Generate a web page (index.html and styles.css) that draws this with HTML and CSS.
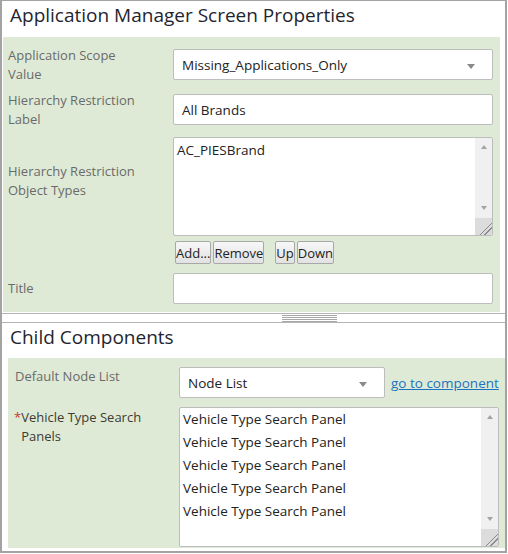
FILE: index.html
```html
<!DOCTYPE html>
<html>
<head>
<meta charset="utf-8">
<link rel="stylesheet" href="styles.css">
</head>
<body>
<div class="frame">
  <section class="props">
    <h1 class="heading">Application Manager Screen Properties</h1>
    <div class="panel panel-top">
      <div class="row">
        <div class="lbl">Application Scope<br>Value</div>
        <div class="ctrl select"><span class="val">Missing_Applications_Only</span><i class="caret"></i></div>
      </div>
      <div class="row row-2">
        <div class="lbl">Hierarchy Restriction<br>Label</div>
        <div class="ctrl input"><span class="val">All Brands</span></div>
      </div>
      <div class="row row-3">
        <div class="lbl lbl-3">Hierarchy Restriction<br>Object Types</div>
        <div class="stack">
          <div class="ctrl textarea">
            <span class="ta-text">AC_PIESBrand</span>
            <div class="vscroll">
              <i class="up"></i><span class="fill"></span><i class="down"></i><span class="grip"></span>
            </div>
          </div>
          <div class="btns">
            <button class="btn">Add...</button><button class="btn">Remove</button>
            <span class="btn-space"></span>
            <button class="btn">Up</button><button class="btn">Down</button>
          </div>
        </div>
      </div>
      <div class="row row-4">
        <div class="lbl">Title</div>
        <div class="ctrl input"></div>
      </div>
    </div>
  </section>
  <div class="splitter"><div class="handle"><i></i><i></i><i></i><i></i></div></div>
  <section class="child">
    <h2 class="heading heading-2">Child Components</h2>
  </section>
  <div class="panel panel-bottom">
    <div class="row row-b1">
      <div class="lbl lbl-b">Default Node List</div>
      <div class="ctrl select select-sm"><span class="val">Node List</span><i class="caret"></i></div>
      <a class="link" href="#">go to component</a>
    </div>
    <div class="row row-b2">
      <div class="lbl lbl-b lbl-req"><span class="ast">*</span><span>Vehicle Type Search<br>Panels</span></div>
      <div class="ctrl listbox">
        <ul class="items">
          <li>Vehicle Type Search Panel</li>
          <li>Vehicle Type Search Panel</li>
          <li>Vehicle Type Search Panel</li>
          <li>Vehicle Type Search Panel</li>
          <li>Vehicle Type Search Panel</li>
        </ul>
        <div class="vscroll">
          <i class="up"></i><span class="fill"></span><i class="down"></i><span class="grip"></span>
        </div>
      </div>
    </div>
  </div>
</div>
</body>
</html>
```
FILE: styles.css
```css
* { box-sizing: border-box; }
html, body { margin: 0; padding: 0; background: #fff; }
body {
  font-family: "Open Sans", "Noto Sans", sans-serif;
  font-size: 13px;
  color: #222;
  width: 508px;
  height: 554px;
  overflow: hidden;
}
.frame {
  width: 507px;
  height: 553px;
  border: 2px solid #a3a3a3;
  border-top-width: 1px;
  display: flex;
  flex-direction: column;
}
.heading {
  margin: 0;
  font-weight: 400;
  font-size: 19px;
  line-height: 28px;
  height: 36px;
  padding-left: 8px;
  color: #1f2530;
}
.panel { background: #dfead6; }
.panel-top {
  margin-left: 1px;
  width: 497px;
  padding: 12px 0 8px 0;
}
.row { display: flex; align-items: center; height: 31px; }
.lbl {
  width: 170px;
  padding-left: 5px;
  color: #6a6a6a;
  line-height: 19px;
  flex: none;
}
.ctrl {
  background: #fff;
  border: 1px solid #bdbdbd;
  border-radius: 2px;
  position: relative;
  flex: none;
}
.select, .input {
  width: 320px;
  height: 31px;
  display: flex;
  align-items: center;
  padding-left: 8px;
  font-size: 13.5px;
}
.val { color: #222; }
.caret {
  position: absolute;
  right: 17px;
  top: 14px;
  width: 0; height: 0;
  border-left: 4.5px solid transparent;
  border-right: 4.5px solid transparent;
  border-top: 5px solid #8a8a8a;
}
.row-2 { margin-top: 14px; }
.row-3 { margin-top: 12px; align-items: flex-start; height: 127px; }
.lbl-3 { padding-top: 25px; }
.stack { display: flex; flex-direction: column; }
.textarea {
  width: 320px;
  height: 99px;
  padding: 3px 0 0 3px;
  font-size: 13.5px;
}
.ta-text { display: block; }
.vscroll {
  position: absolute;
  top: 0; right: 0; bottom: 0;
  width: 17px;
  background: #f0f0f0;
  display: flex;
  flex-direction: column;
  align-items: center;
}
.vscroll .up, .vscroll .down {
  width: 0; height: 0;
  border-left: 3.5px solid transparent;
  border-right: 3.5px solid transparent;
  margin-top: 7px;
}
.vscroll .up { border-bottom: 4px solid #a3a3a3; }
.vscroll .down { border-top: 4px solid #a3a3a3; margin-top: 0; margin-bottom: 8px; }
.vscroll .fill { flex: 1; }
.vscroll .grip {
  width: 17px;
  height: 17px;
  background: #dcdcdc linear-gradient(135deg, transparent 0 62%, #8a8a8a 62% 67%, transparent 67% 76%, #8a8a8a 76% 81%, transparent 81%);
}
.btns {
  display: flex;
  margin-top: 5px;
  margin-left: 2px;
  gap: 2px;
}
.btn {
  font-family: "Open Sans", "Noto Sans", sans-serif;
  font-size: 13px;
  color: #222;
  height: 23px;
  padding: 0;
  border: 1px solid #a8a8a8;
  border-radius: 2px;
  background: linear-gradient(#f7f7f7, #e2e2e2);
  line-height: 20px;
}
.btn-space { width: 7px; }
.row-4 { margin-top: 9px; }

.splitter {
  margin-top: 1px;
  height: 10px;
  flex: none;
  border-top: 1px solid #b4b4b4;
  border-bottom: 1px solid #b4b4b4;
  display: flex;
}
.handle {
  width: 55px;
  margin-left: 280px;
  display: flex;
  flex-direction: column;
  padding-top: 1px;
  gap: 1px;
}
.handle i { display: block; height: 1px; background: #a8a8a8; }
.heading-2 {
  height: 35px;
  line-height: 29px;
}
.panel-bottom {
  margin-left: 6px;
  width: 497px;
  flex: 1;
  padding: 9px 0 0 0;
  margin-bottom: 3px;
}
.lbl-b {
  width: 171px;
  padding-left: 7px;
  color: #6a6a6a;
  align-self: flex-start;
}
.select-sm { width: 206px; }
.link {
  margin-left: 6px;
  color: #1a73c0;
  font-size: 13.5px;
  text-decoration: underline;
  padding-top: 1px;
}
.row-b2 { margin-top: 9px; align-items: flex-start; height: 140px; }
.lbl-req { display: flex; color: #3d3a33; padding-left: 6px; padding-top: 1px; }
.ast { color: #c0392b; }
.listbox {
  width: 320px;
  height: 140px;
}
.items {
  list-style: none;
  margin: 0;
  padding: 0 0 0 3px;
  font-size: 13.5px;
}
.items li { height: 23px; line-height: 23px; }
```
